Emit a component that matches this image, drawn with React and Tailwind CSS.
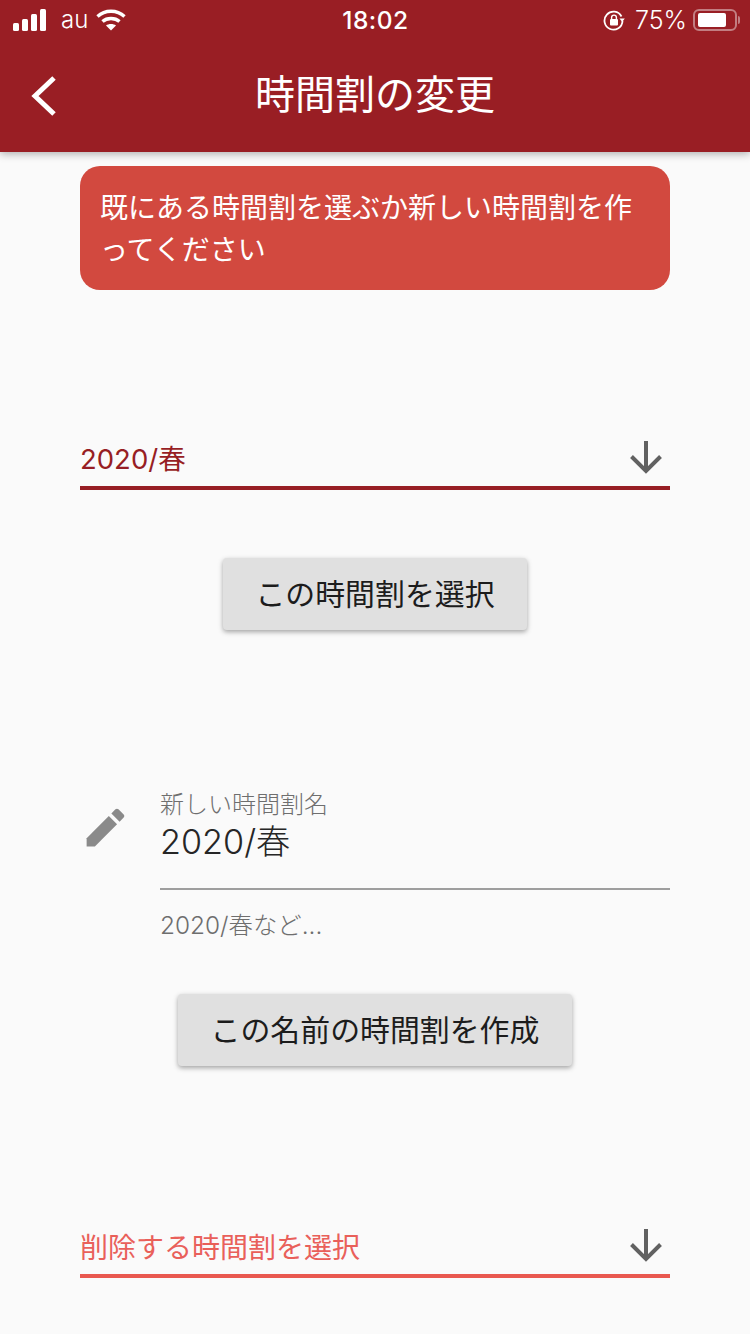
function Arrow() {
  return (
    <svg className="-translate-y-[3px]" width="36" height="36" viewBox="0 0 36 36" fill="none" stroke="#616161" strokeWidth="4">
      <path d="M18 2 V32" />
      <path d="M3.5 17.5 L18 32 L32.5 17.5" />
    </svg>
  );
}

function Button({ children, className }) {
  return (
    <div className={"mx-auto flex h-[72px] items-center justify-center rounded-[4px] bg-[#e0e0e0] text-[29.9px] text-[#1c1c1c] shadow-[0_2px_5px_rgba(0,0,0,0.35)] " + className}>
      {children}
    </div>
  );
}

export default function App() {
  return (
    <div className="h-[1334px] w-[750px] overflow-hidden bg-[#fafafa]" style={{ fontFamily: 'Inter, "Noto Sans CJK JP", sans-serif' }}>
      <header className="relative z-10 h-[152px] bg-[#991e24] text-white shadow-[0_2px_8px_rgba(0,0,0,0.3)]">
        <div className="flex h-[40px] items-center justify-between pl-[13px] pr-[10px]">
          <div className="flex items-center">
            <svg width="34" height="22" viewBox="0 0 34 22" fill="white">
              <rect x="0" y="14" width="6" height="8" rx="1.5" />
              <rect x="9" y="10" width="6" height="12" rx="1.5" />
              <rect x="18" y="5" width="6" height="17" rx="1.5" />
              <rect x="27" y="0" width="6" height="22" rx="1.5" />
            </svg>
            <span className="ml-[14px] text-[24px] font-light leading-none">au</span>
            <svg className="ml-[8px]" width="30" height="22" viewBox="0 0 30 22" fill="none" stroke="white" strokeWidth="3.4">
              <path d="M1.5 7.5 C9 0.5 21 0.5 28.5 7.5" />
              <path d="M6.5 12.5 C11 8.5 19 8.5 23.5 12.5" />
              <path d="M15 21.5 L10 16.5 C12.5 14.5 17.5 14.5 20 16.5 Z" fill="white" stroke="none" />
            </svg>
          </div>
          <div className="flex items-center">
            <svg width="22" height="22" viewBox="0 0 22 22" fill="none" stroke="white" strokeWidth="1.8">
              <path d="M18.5 7.5 A9 9 0 1 0 19.5 12" />
              <path d="M16.5 9.5 L21.8 9.5 L19.2 13 Z" fill="white" stroke="none" />
              <rect x="7" y="10" width="8" height="6.5" rx="1" fill="white" stroke="none" />
              <path d="M8.6 10 V8.5 A2.4 2.4 0 0 1 13.4 8.5 V10" strokeWidth="1.4" />
            </svg>
            <span className="ml-[10px] text-[25px] font-light leading-none">75%</span>
            <div className="ml-[6px] flex h-[22px] w-[44px] items-center rounded-[6px] border-2 border-[#c27e82] pl-[3px]">
              <div className="h-[14px] w-[28px] rounded-[2px] bg-white" />
            </div>
            <div className="ml-[1px] h-[8px] w-[2px] rounded-r bg-[#c27e82]" />
          </div>
        </div>
        <div className="absolute left-[1px] right-0 top-[5px] text-center text-[24.5px] font-medium leading-[30px] tracking-[0.5px]">18:02</div>
        <div className="relative flex h-[112px] items-center justify-center pb-[3px]">
          <svg className="absolute left-[30px] top-[35px]" width="28" height="42" viewBox="0 0 28 42" fill="none" stroke="white" strokeWidth="5">
            <path d="M24 3 L5 21 L24 39" />
          </svg>
          <span className="text-[40px] leading-none">時間割の変更</span>
        </div>
      </header>

      <main className="px-[80px]">
        <div className="mt-[14px] h-[124px] rounded-[20px] bg-[#d2493f] px-[20px] pt-[21px] text-[28px] leading-[42px] text-white">
          既にある時間割を選ぶか新しい時間割を作ってください
        </div>

        <div className="mt-[140px] flex h-[60px] items-center justify-between border-b-4 border-[#971e24] pt-[4px]">
          <span className="text-[27.5px] text-[#971e24]">2020/春</span>
          <div className="mr-[6px]"><Arrow /></div>
        </div>

        <Button className="mt-[68px] w-[304px]">この時間割を選択</Button>

        <div className="mt-[163px] flex">
          <svg className="-ml-[1px] mt-[9px] shrink-0" width="50" height="50" viewBox="0 0 39.4 39.4" fill="#8a8a8a">
            <path d="M6 28.5 V35 H12.5 L30 17.5 L23.5 11 Z" />
            <path d="M25.5 9 L32 15.5 L35.2 12.3 C35.9 11.6 35.9 10.6 35.2 9.9 L31.1 5.8 C30.4 5.1 29.4 5.1 28.7 5.8 Z" />
          </svg>
          <div className="ml-[31px] flex-1">
            <div className="h-[97px] border-b-2 border-[#9e9e9e]">
              <div className="h-[24px] text-[24px] font-light leading-[24px] text-[#6e6e6e]">新しい時間割名</div>
              <div className="mt-[5px] text-[34.2px] font-light leading-[40px] text-[#262626]">2020/春</div>
            </div>
            <div className="mt-[20px] text-[24.4px] font-light leading-[30px] text-[#6e6e6e]">2020/春など...</div>
          </div>
        </div>

        <Button className="mt-[54px] w-[394px]">この名前の時間割を作成</Button>

        <div className="mt-[152px] flex h-[60px] items-center justify-between border-b-4 border-[#e9584f] pt-[4px]">
          <span className="text-[28px] text-[#e9605a]">削除する時間割を選択</span>
          <div className="mr-[6px]"><Arrow /></div>
        </div>
      </main>
    </div>
  );
}
